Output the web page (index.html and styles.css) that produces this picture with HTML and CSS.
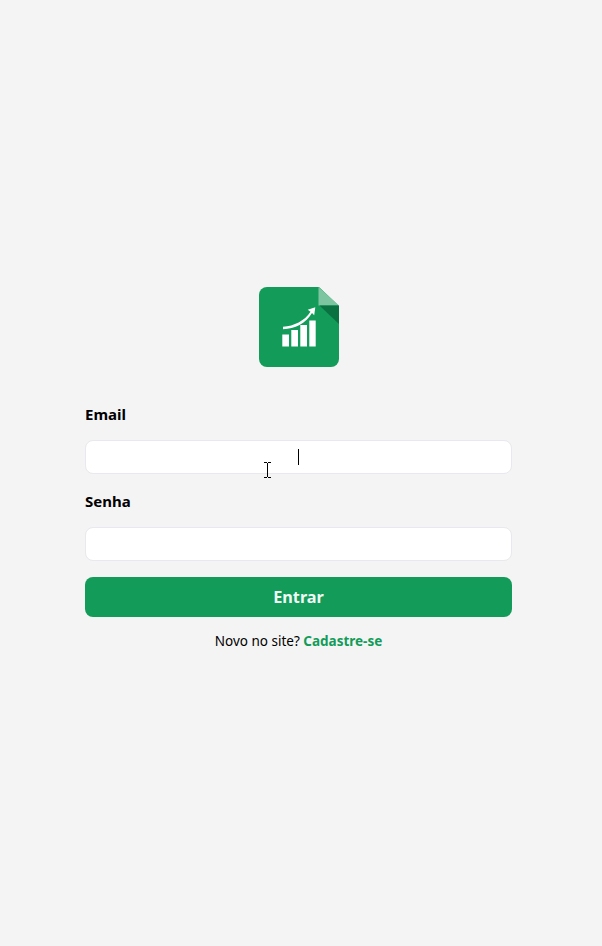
FILE: index.html
```html
<!DOCTYPE html>
<html lang="pt-BR">
<head>
<meta charset="utf-8">
<title>Entrar</title>
<link rel="stylesheet" href="styles.css">
</head>
<body>
<main class="login">
  <svg class="logo" viewBox="0 0 80 80" aria-hidden="true">
    <path fill="#129b59" d="M8 0H60L80 19V72a8 8 0 0 1-8 8H8a8 8 0 0 1-8-8V8a8 8 0 0 1 8-8z"/>
    <path fill="#7cc5a0" d="M59.500 0L80 18.500H59.500z"/>
    <path fill="#0a7141" d="M60.500 18.500H80V37z"/>
    <path fill="#fff" d="M23.300 47.500h6.700v12h-6.700zM32.300 43h6.700v16.500h-6.700zM41.300 38h6.700v21.500h-6.700zM50.300 33.500h6.400v26h-6.400z"/>
    <path fill="#fff" d="M24 39.700C35 38.900 45.500 34 51.500 24.700L48.700 22.700L56.300 20.200L55.200 28.200L53 26C46.500 36.500 36 41.800 24 42.200z"/>
  </svg>
  <form class="form">
    <label class="label" for="email">Email</label>
    <div class="field"><input class="input" id="email" type="email"><span class="caret"></span><svg class="cursor" viewBox="0 0 7 16" aria-hidden="true"><path d="M0 .5H3M4 .5H7M0 15.500H3M4 15.500H7M3.500 1V15" fill="none" stroke="#000"/></svg></div>
    <label class="label label-password" for="senha">Senha</label>
    <div class="field"><input class="input" id="senha" type="password"></div>
    <button class="submit" type="button"><span>Entrar</span></button>
  </form>
  <p class="signup"><span class="question">Novo no site?</span> <a class="link" href="#">Cadastre-se</a></p>
</main>
</body>
</html>
```
FILE: styles.css
```css
* { box-sizing: border-box; }
body {
  margin: 0;
  min-height: 946px;
  background: #f4f4f4;
  color: #000;
  font-family: "Noto Sans", sans-serif;
}
.login {
  width: 427px;
  margin-left: 85px;
  padding-top: 287px;
  display: flex;
  flex-direction: column;
}
.logo { width: 80px; height: 80px; margin-left: 174px; }
.form { display: flex; flex-direction: column; margin-top: 36px; }
.label {
  height: 22px;
  line-height: 22px;
  font-size: 15px;
  font-weight: 700;
}
.label-password { margin-top: 16px; }
.field { position: relative; height: 34px; margin-top: 15px; }
.input {
  display: block;
  width: 100%;
  height: 34px;
  padding: 0 10px;
  border: 1px solid #e8e8ee;
  border-radius: 8px;
  background: #fff;
  text-align: center;
  outline: 0;
}
.caret {
  position: absolute;
  left: 213px;
  top: 9px;
  width: 1px;
  height: 16px;
  background: #000;
}
.cursor { position: absolute; left: 179px; top: 22px; width: 7px; height: 16px; }
.submit {
  height: 40px;
  margin-top: 16px;
  padding: 0;
  border: 0;
  border-radius: 8px;
  background: #129b59;
  color: #f0faf5;
  font: 700 16.300px/40px "Noto Sans", sans-serif;
}
.signup {
  margin: 14px 0 0;
  text-align: center;
  font-size: 13.500px;
  line-height: 20px;
  white-space: nowrap;
}
.link { color: #129b59; font-weight: 700; text-decoration: none; }
```
